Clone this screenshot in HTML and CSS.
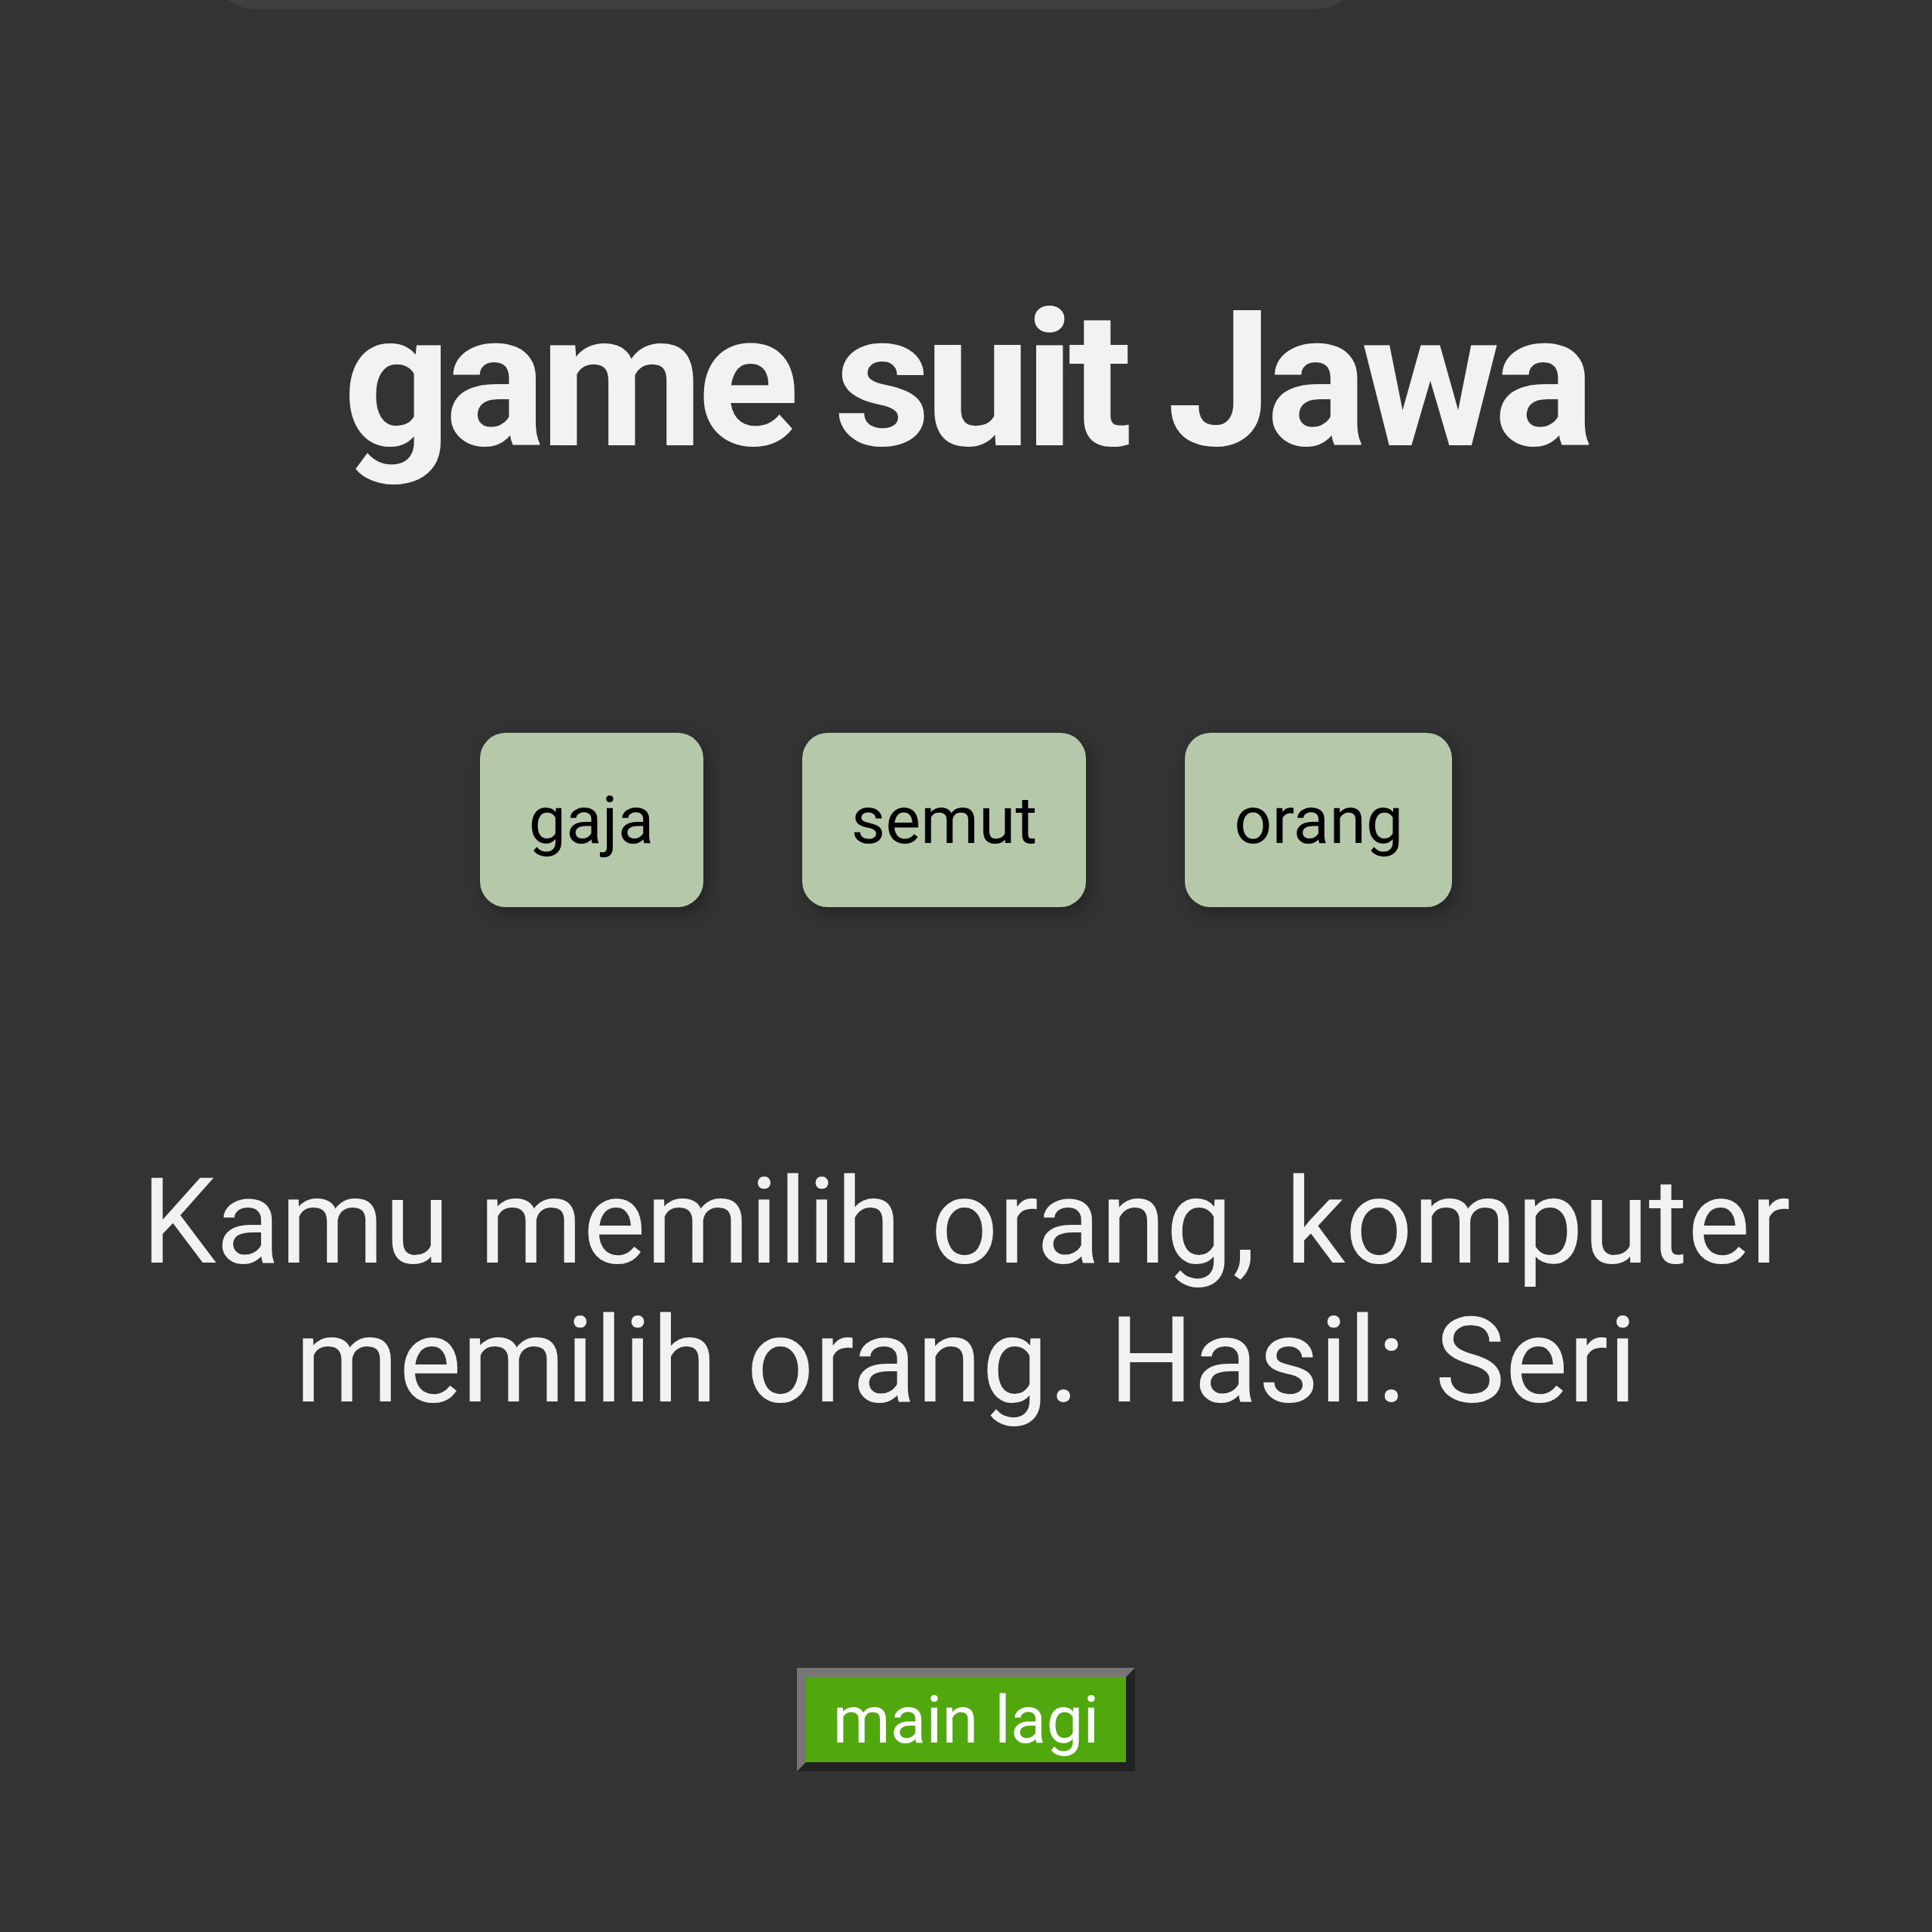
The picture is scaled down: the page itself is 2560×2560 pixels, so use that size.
FILE: index.html
```html
<!DOCTYPE html>
<html lang="id">
<head>
<meta charset="utf-8">
<title>game suit Jawa</title>
<link rel="stylesheet" href="styles.css">
</head>
<body>
<div class="topbar"></div>
<main class="game">
  <h1 class="title">game suit Jawa</h1>
  <div class="choices">
    <button class="choice">gaja</button>
    <button class="choice">semut</button>
    <button class="choice">orang</button>
  </div>
  <p class="result">Kamu memilih orang, komputer memilih orang. Hasil: Seri</p>
  <button class="again">main lagi</button>
</main>
</body>
</html>
```

FILE: styles.css
```css
html, body {
  margin: 0;
  padding: 0;
  background: #333333;
}

body {
  font-family: Roboto, "Liberation Sans", sans-serif;
  color: #f2f2f2;
}

.topbar {
  width: 1526px;
  height: 72px;
  margin: -60px 0 0 278px;
  background: #404040;
  border-radius: 0 0 60px 60px;
}

.game {
  display: flex;
  flex-direction: column;
  align-items: center;
  text-align: center;
}

.title {
  margin: 346px 0 0;
  font-size: 250px;
  font-weight: 700;
  letter-spacing: -8px;
  line-height: normal;
  color: #f2f2f2;
}

.choices {
  display: flex;
  justify-content: center;
  gap: 131px;
  margin-top: 320px;
}

.choice {
  font-family: Roboto, "Liberation Sans", sans-serif;
  font-size: 88px;
  line-height: normal;
  color: #000;
  background: #b5c9aa;
  border: none;
  border-radius: 34px;
  padding: 64px 65px;
  box-shadow: 6px 8px 22px rgba(0, 0, 0, 0.3);
}

.result {
  margin: 325px 0 0;
  font-size: 157px;
  line-height: normal;
  color: #f2f2f2;
}

.again {
  margin-top: 315px;
  font-family: Roboto, "Liberation Sans", sans-serif;
  font-size: 87px;
  line-height: normal;
  color: #ffffff;
  background: #50a80e;
  padding: 6px 36px 5px;
  border-style: solid;
  border-width: 12px;
  border-color: #767676 #222222 #222222 #767676;
}
```
